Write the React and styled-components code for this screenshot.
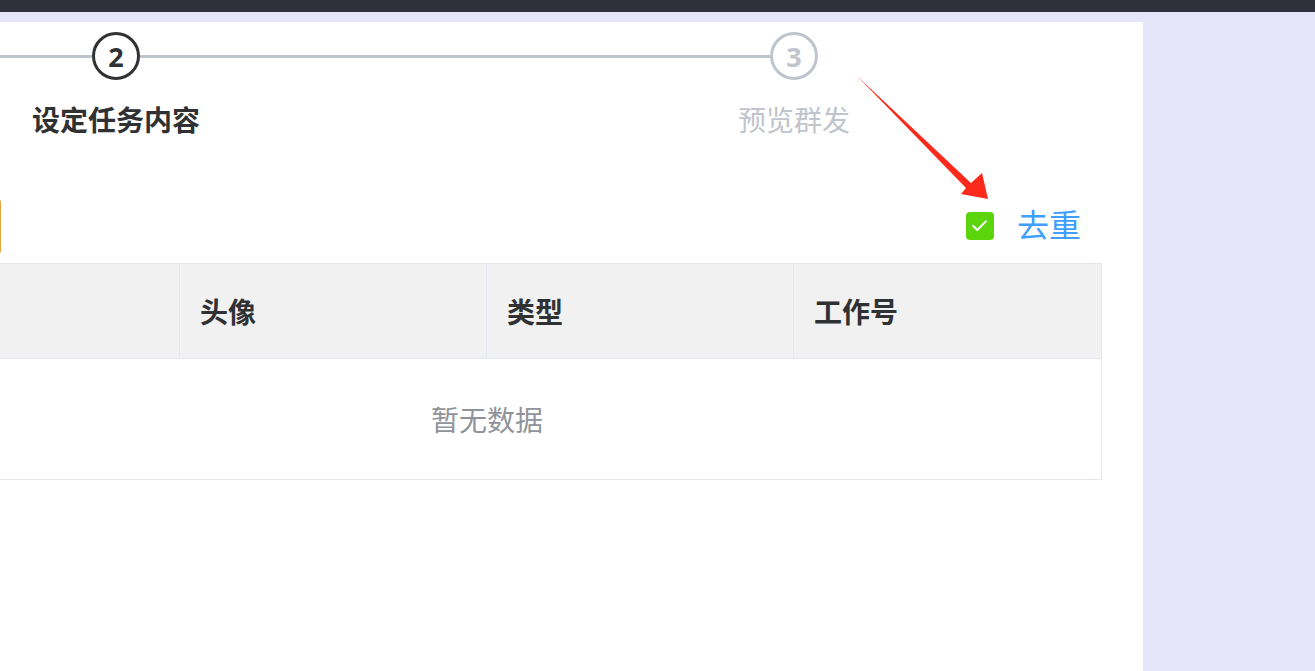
import React from "react";
import styled, { createGlobalStyle } from "styled-components";

const GlobalStyle = createGlobalStyle`
  html, body {
    margin: 0;
    padding: 0;
    background: #e4e5f9;
    font-family: "Noto Sans CJK SC", "Noto Sans", sans-serif;
    overflow: hidden;
  }
`;

const TopBar = styled.div`
  height: 12px;
  background: #2e313a;
`;

const Page = styled.div`
  display: flex;
  padding-top: 10px;
`;

const Panel = styled.main`
  position: relative;
  width: 1143px;
  min-height: 649px;
  background: #fff;
  overflow: hidden;
`;

const Steps = styled.div`
  display: flex;
  margin-left: -223px;
  padding-top: 10px;
`;

const Step = styled.div`
  width: 678px;
  flex: none;
  display: flex;
  flex-direction: column;
  align-items: center;
`;

const StepHead = styled.div`
  position: relative;
  width: 100%;
  height: 48px;
  display: flex;
  justify-content: center;
`;

const StepLine = styled.div`
  position: absolute;
  top: 23px;
  height: 3px;
  background: #c0c4cc;
  left: ${(p) => (p.$side === "prev" ? "calc(-50% + 24px)" : "calc(50% + 24px)")};
  right: ${(p) => (p.$side === "prev" ? "calc(50% + 24px)" : "calc(-50% + 24px)")};
`;

const StepIcon = styled.div`
  width: 48px;
  height: 48px;
  box-sizing: border-box;
  border-radius: 50%;
  border: 3px solid ${(p) => (p.$active ? "#303133" : "#c0c4cc")};
  color: ${(p) => (p.$active ? "#303133" : "#c0c4cc")};
  display: flex;
  align-items: center;
  justify-content: center;
  font-family: "Noto Sans", sans-serif;
  font-weight: 700;
  font-size: 27px;
  line-height: 1;
  background: #fff;
  position: relative;
  z-index: 1;
`;

const StepTitle = styled.div`
  margin-top: 19px;
  font-size: 28px;
  line-height: 40px;
  font-weight: ${(p) => (p.$active ? 700 : 400)};
  color: ${(p) => (p.$active ? "#303133" : "#c0c4cc")};
  white-space: nowrap;
`;

const Content = styled.section`
  margin-left: -128px;
  width: 1230px;
`;

const Toolbar = styled.div`
  margin-top: 59px;
  height: 57px;
  display: flex;
  align-items: center;
  justify-content: space-between;
`;

const EdgeButton = styled.button`
  width: 129px;
  height: 57px;
  box-sizing: border-box;
  border: 1px solid #e6a23c;
  border-radius: 4px;
  background: #fff;
  padding: 0;
`;

const CheckLabel = styled.label`
  display: flex;
  align-items: center;
  gap: 23px;
  padding-right: 21px;
  margin-bottom: 2px;
  cursor: pointer;
`;

const CheckBox = styled.span`
  width: 28px;
  height: 28px;
  border-radius: 4px;
  background: #5cd50c;
  display: flex;
  align-items: center;
  justify-content: center;
`;

const CheckText = styled.span`
  font-size: 32px;
  line-height: 40px;
  color: #409eff;
  margin-bottom: 6px;
`;

const Table = styled.div`
  margin-top: 8px;
  border: 1px solid #e3e8ee;
  box-sizing: border-box;
`;

const HeadRow = styled.div`
  display: grid;
  grid-template-columns: repeat(4, 1fr);
  background: #f1f1f1;
  border-bottom: 1px solid #e3e8ee;
`;

const HeadCell = styled.div`
  height: 94px;
  display: flex;
  align-items: center;
  padding-left: 20px;
  border-right: 1px solid #e3e8ee;
  font-size: 28px;
  font-weight: 700;
  color: #303133;
  &:last-child {
    border-right: none;
  }
`;

const EmptyRow = styled.div`
  height: 120px;
  display: flex;
  align-items: center;
  justify-content: center;
  font-size: 28px;
  color: #909399;
`;

const Arrow = styled.svg`
  position: absolute;
  left: 850px;
  top: 48px;
`;

export default function App() {
  const steps = [
    { n: 2, title: "设定任务内容", active: true, prev: true },
    { n: 3, title: "预览群发", active: false, prev: true },
  ];
  const columns = ["", "头像", "类型", "工作号"];
  return (
    <>
      <GlobalStyle />
      <TopBar />
      <Page>
        <Panel>
          <Steps>
            {steps.map((s) => (
              <Step key={s.n}>
                <StepHead>
                  {s.prev && <StepLine $side="prev" />}
                  <StepIcon $active={s.active}>{s.n}</StepIcon>
                </StepHead>
                <StepTitle $active={s.active}>{s.title}</StepTitle>
              </Step>
            ))}
          </Steps>
          <Content>
            <Toolbar>
              <EdgeButton aria-label="操作" />
              <CheckLabel>
                <CheckBox>
                  <svg width="17" height="13" viewBox="0 0 17 13">
                    <path
                      d="M2 6.8 L6.3 11 L15 2.2"
                      fill="none"
                      stroke="#fff"
                      strokeWidth="1.9"
                      strokeLinecap="round"
                      strokeLinejoin="round"
                    />
                  </svg>
                </CheckBox>
                <CheckText>去重</CheckText>
              </CheckLabel>
            </Toolbar>
            <Table>
              <HeadRow>
                {columns.map((c, i) => (
                  <HeadCell key={i}>{c}</HeadCell>
                ))}
              </HeadRow>
              <EmptyRow>暂无数据</EmptyRow>
            </Table>
          </Content>
          <Arrow width="150" height="140" viewBox="0 0 150 140">
            <polygon
              points="7,6 121,113 132,103 138,129 111,124 116,118"
              fill="#fa2a1c"
            />
          </Arrow>
        </Panel>
      </Page>
    </>
  );
}
